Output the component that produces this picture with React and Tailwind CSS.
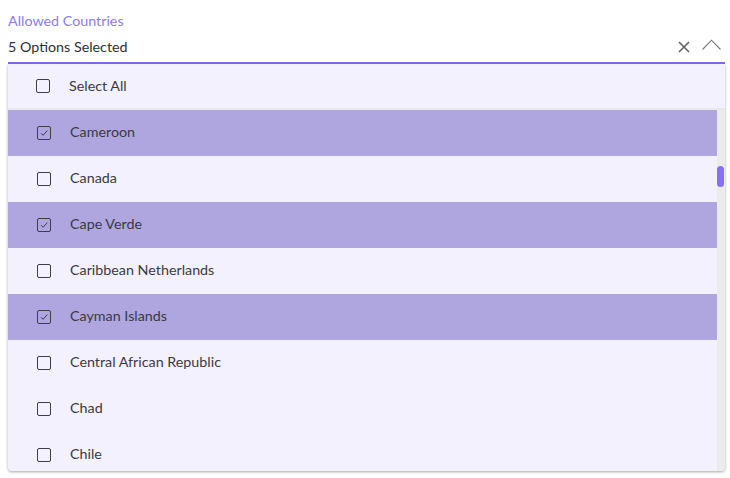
const countries = [
  { name: "Cameroon", checked: true },
  { name: "Canada", checked: false },
  { name: "Cape Verde", checked: true },
  { name: "Caribbean Netherlands", checked: false },
  { name: "Cayman Islands", checked: true },
  { name: "Central African Republic", checked: false },
  { name: "Chad", checked: false },
  { name: "Chile", checked: false },
];

const Box = ({ checked }) => (
  <span className="flex h-[14px] w-[14px] items-center justify-center rounded-[2px] border border-[#3d3d48]">
    {checked && (
      <svg width="10" height="10" viewBox="0 0 10 10" fill="none">
        <path d="M2 5.2 L4.1 7.3 L8.2 2.6" stroke="#3d3d48" strokeWidth="1" />
      </svg>
    )}
  </span>
);

export default function App() {
  return (
    <div className="h-[478px] w-[730px] bg-white font-['Lato',sans-serif] text-[14.3px]">
      <div className="pl-2 pr-[5px] pt-[12px]">
        <div className="leading-[18px] text-[#8b7cf2]">Allowed Countries</div>
        <div className="flex h-[34px] items-center border-b-2 border-[#7f6df0] pb-[2px]">
          <span className="mt-[3px] flex-1 text-[#2f2f35]">5 Options Selected</span>
          <svg width="12" height="12" viewBox="0 0 12 12" className="mr-[12px] mt-[3px]">
            <path d="M1 1 L11 11 M11 1 L1 11" stroke="#626269" strokeWidth="1.6" />
          </svg>
          <svg width="19" height="11" viewBox="0 0 19 11" className="mr-[4px] -mt-[2px]" fill="none">
            <path d="M0.5 10.5 L9.5 1.2 L18.5 10.5" stroke="#76767c" strokeWidth="1.1" />
          </svg>
        </div>
        <div className="overflow-hidden rounded-b-[4px] bg-[#f3f1fe] shadow-[0_1px_3px_rgba(0,0,0,0.35)]">
          <div className="flex h-[46px] items-center border-b-2 border-[#e9e8f0] pl-[28px] text-[#3a3a42]">
            <Box />
            <span className="ml-[19px]">Select All</span>
          </div>
          <div className="flex h-[361px]">
            <div className="flex-1">
              {countries.map((c) => (
                <div
                  key={c.name}
                  className={`flex h-[46px] items-center pl-[29px] text-[#3a3a42] ${c.checked ? "bg-[#afa6e0]" : ""}`}
                >
                  <Box checked={c.checked} />
                  <span className="ml-[19px] -mt-[3px]">{c.name}</span>
                </div>
              ))}
            </div>
            <div className="w-[8px] bg-[#ebebeb] pt-[56px]">
              <div className="h-[21px] w-[7px] rounded-full bg-[#8571f2]" />
            </div>
          </div>
        </div>
      </div>
    </div>
  );
}
